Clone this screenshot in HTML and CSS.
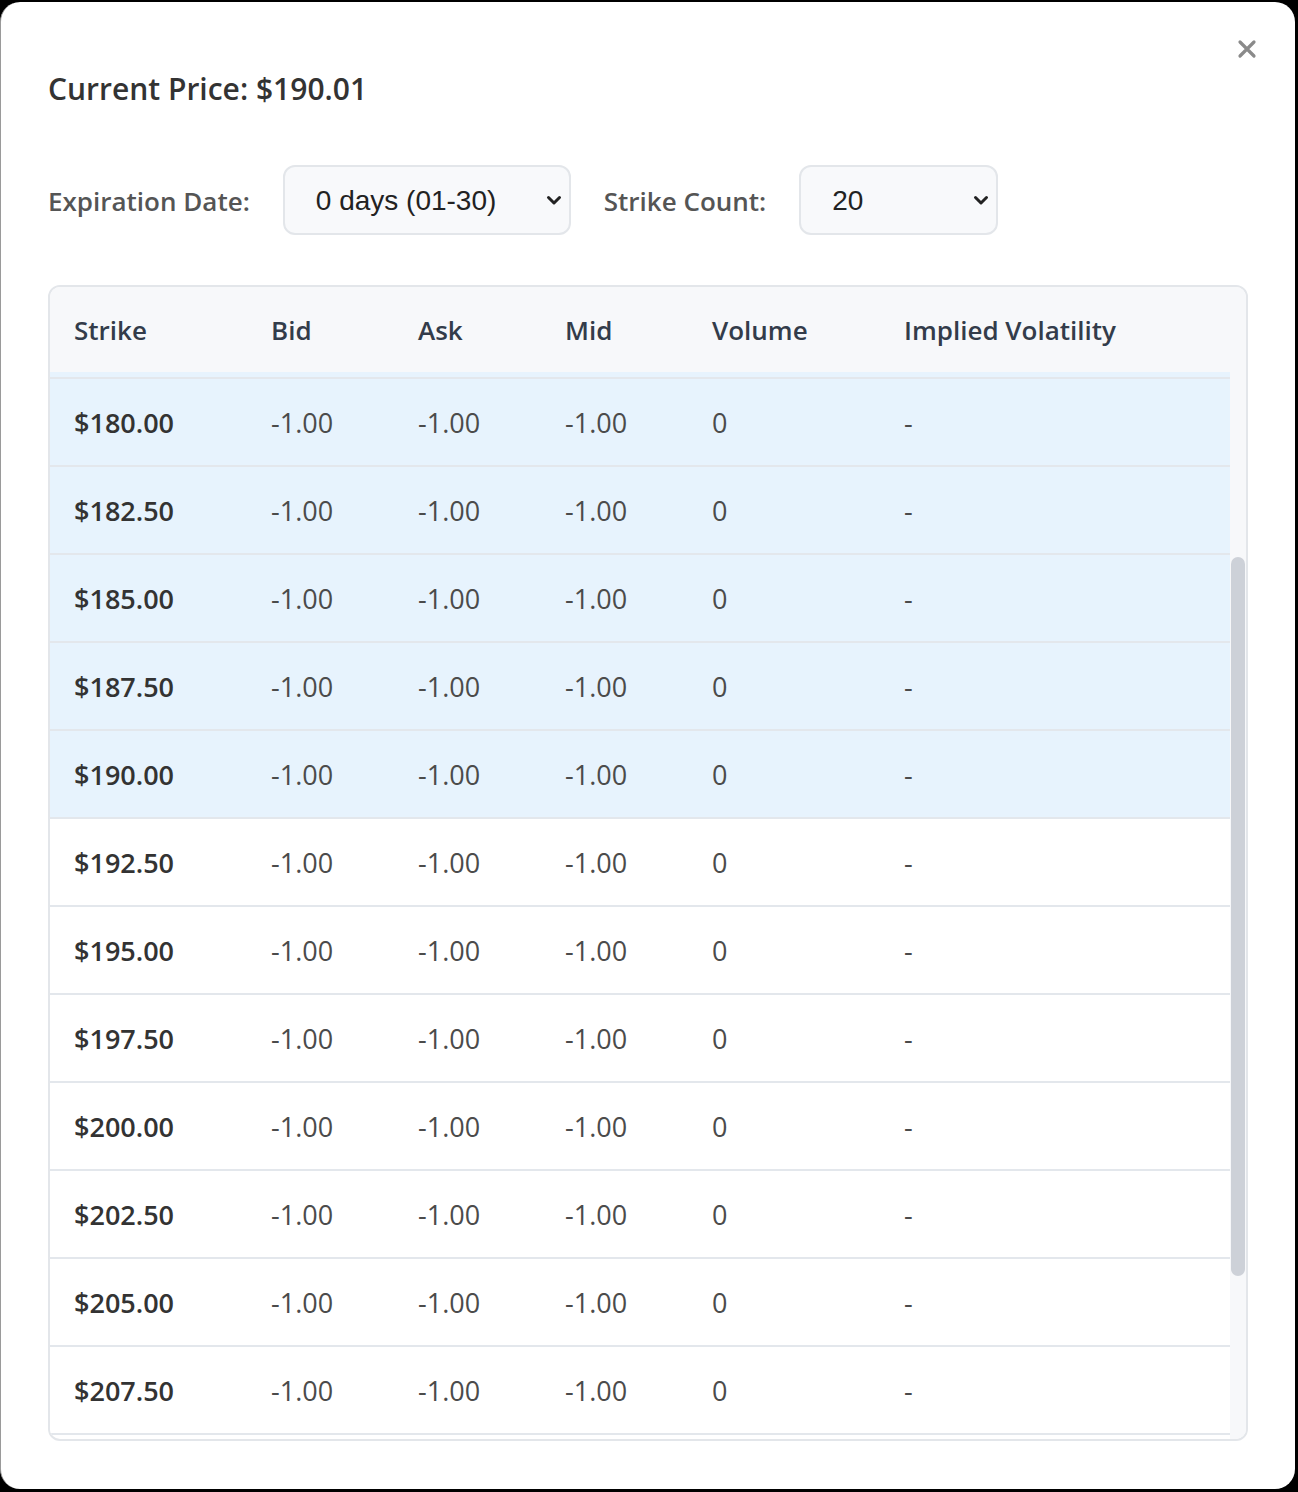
FILE: index.html
```html
<!DOCTYPE html>
<html>
<head>
<meta charset="utf-8">
<link rel="stylesheet" href="styles.css">
</head>
<body>
<div class="modal">
  <button class="close" aria-label="Close">
    <svg width="20" height="20" viewBox="0 0 20 20"><path d="M3 3 L17 17 M17 3 L3 17" stroke="#8a8a8a" stroke-width="3.2" stroke-linecap="round"/></svg>
  </button>
  <h2 class="price">Current Price: $190.01</h2>
  <div class="controls">
    <label class="label">Expiration Date:</label>
    <div class="select-wrap sel-date">
      <select class="select"><option>0 days (01-30)</option></select>
      <svg class="chev" width="16" height="12" viewBox="0 0 16 12"><path d="M2.5 3.5 L8 9 L13.5 3.5" fill="none" stroke="#222" stroke-width="3" stroke-linecap="round" stroke-linejoin="round"/></svg>
    </div>
    <label class="label">Strike Count:</label>
    <div class="select-wrap sel-count">
      <select class="select"><option>20</option></select>
      <svg class="chev" width="16" height="12" viewBox="0 0 16 12"><path d="M2.5 3.5 L8 9 L13.5 3.5" fill="none" stroke="#222" stroke-width="3" stroke-linecap="round" stroke-linejoin="round"/></svg>
    </div>
  </div>
  <div class="table-box">
    <div class="table">
      <div class="row head">
        <div>Strike</div><div>Bid</div><div>Ask</div><div>Mid</div><div>Volume</div><div>Implied Volatility</div>
      </div>
      <div class="sliver"></div>
      <div class="row itm"><div class="strike">$180.00</div><div>-1.00</div><div>-1.00</div><div>-1.00</div><div>0</div><div>-</div></div>
      <div class="row itm"><div class="strike">$182.50</div><div>-1.00</div><div>-1.00</div><div>-1.00</div><div>0</div><div>-</div></div>
      <div class="row itm"><div class="strike">$185.00</div><div>-1.00</div><div>-1.00</div><div>-1.00</div><div>0</div><div>-</div></div>
      <div class="row itm"><div class="strike">$187.50</div><div>-1.00</div><div>-1.00</div><div>-1.00</div><div>0</div><div>-</div></div>
      <div class="row itm"><div class="strike">$190.00</div><div>-1.00</div><div>-1.00</div><div>-1.00</div><div>0</div><div>-</div></div>
      <div class="row"><div class="strike">$192.50</div><div>-1.00</div><div>-1.00</div><div>-1.00</div><div>0</div><div>-</div></div>
      <div class="row"><div class="strike">$195.00</div><div>-1.00</div><div>-1.00</div><div>-1.00</div><div>0</div><div>-</div></div>
      <div class="row"><div class="strike">$197.50</div><div>-1.00</div><div>-1.00</div><div>-1.00</div><div>0</div><div>-</div></div>
      <div class="row"><div class="strike">$200.00</div><div>-1.00</div><div>-1.00</div><div>-1.00</div><div>0</div><div>-</div></div>
      <div class="row"><div class="strike">$202.50</div><div>-1.00</div><div>-1.00</div><div>-1.00</div><div>0</div><div>-</div></div>
      <div class="row"><div class="strike">$205.00</div><div>-1.00</div><div>-1.00</div><div>-1.00</div><div>0</div><div>-</div></div>
      <div class="row"><div class="strike">$207.50</div><div>-1.00</div><div>-1.00</div><div>-1.00</div><div>0</div><div>-</div></div>
    </div>
    <div class="scrollbar"><div class="thumb"></div></div>
  </div>
</div>
</body>
</html>
```
FILE: styles.css
```css
html, body {
  margin: 0;
  padding: 0;
  background: #000;
}
body {
  font-family: "Open Sans", "Noto Sans", sans-serif;
  width: 1298px;
  height: 1492px;
  overflow: hidden;
}
.modal {
  position: relative;
  box-sizing: border-box;
  width: 1295px;
  height: 1487px;
  margin: 2px 3px 3px 0;
  background: #fff;
  border-radius: 20px;
  border-left: 1px solid #9a9a9a;
  padding: 67px 47px 48px 47px;
}
.close {
  position: absolute;
  top: 36px;
  right: 37px;
  width: 22px;
  height: 22px;
  padding: 0;
  border: 0;
  background: transparent;
  display: flex;
  align-items: center;
  justify-content: center;
}
.price {
  margin: 0;
  font-size: 30px;
  line-height: 40px;
  font-weight: 600;
  color: #333;
}
.controls {
  margin-top: 56px;
  display: flex;
  align-items: center;
  gap: 33px;
  height: 70px;
}
.label {
  font-size: 26px;
  font-weight: 600;
  color: #555;
  padding-top: 2px;
}
.select-wrap {
  position: relative;
  height: 70px;
}
.sel-date { width: 288px; }
.sel-count { width: 199px; }
.select {
  -webkit-appearance: none;
  appearance: none;
  width: 100%;
  height: 100%;
  box-sizing: border-box;
  border: 2px solid #e3e6ea;
  border-radius: 12px;
  background: #f8f9fb;
  font-family: "Liberation Sans", Arial, sans-serif;
  font-size: 28px;
  color: #222;
  padding: 0 0 0 31px;
  outline: none;
}
.chev {
  position: absolute;
  right: 9px;
  top: 29px;
  pointer-events: none;
}
.table-box {
  margin-top: 50px;
  border: 2px solid #e3e6ea;
  border-radius: 12px;
  overflow: hidden;
  height: 1156px;
  box-sizing: border-box;
  display: flex;
  background: #fff;
}
.table {
  flex: 1;
  min-width: 0;
}
.scrollbar {
  width: 16px;
  background: #f7f8fa;
  padding-top: 270px;
  box-sizing: border-box;
  display: flex;
  justify-content: center;
}
.thumb {
  width: 14px;
  height: 719px;
  border-radius: 7px;
  background: #cdd1d8;
}
.row {
  display: grid;
  grid-template-columns: 197px 147px 147px 147px 192px 1fr;
  align-items: center;
  box-sizing: border-box;
  height: 88px;
  padding-left: 24px;
  border-bottom: 2px solid #e3e7ec;
  font-size: 27px;
  color: #4b4b4b;
  background: #fff;
}
.row.itm {
  background: #e7f3fd;
}
.sliver {
  height: 7px;
  box-sizing: border-box;
  background: #e7f3fd;
  border-bottom: 2px solid #e3e7ec;
}
.row.head {
  height: 85px;
  border-bottom: 0;
  background: #f7f8fa;
  font-weight: 600;
  font-size: 26px;
  color: #333c4a;
}
.strike {
  font-weight: 600;
  color: #333;
}
```
